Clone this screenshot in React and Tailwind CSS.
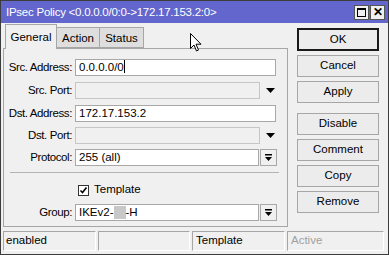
import React from "react";

const font = { fontFamily: '"Liberation Sans", Arial, sans-serif' };

function Arrow() {
  return (
    <svg width="9" height="5" viewBox="0 0 9 5" className="block">
      <path d="M0 0 H9 L4.5 5 Z" fill="#000" />
    </svg>
  );
}

function BarArrow() {
  return (
    <svg width="9" height="9" viewBox="0 0 9 9" className="block">
      <rect x="1" y="1" width="7" height="1.5" fill="#000" />
      <path d="M1 4 H8 L4.5 8 Z" fill="#000" />
    </svg>
  );
}

function Label({ children }) {
  return <div className="w-[71px] text-right pr-[3px] shrink-0 whitespace-nowrap tracking-[-0.4px]">{children}</div>;
}

function Input({ value, w, disabled }) {
  return (
    <div
      className={`h-[17px] border flex items-center pl-[3px] whitespace-nowrap ${
        disabled ? "bg-[#f0f0f0] border-[#c6c6c6]" : "bg-white border-[#a8a8a8]"
      }`}
      style={{ width: w }}
    >
      {value}
    </div>
  );
}

function Btn({ children, ok }) {
  return (
    <div
      className={`w-[82px] flex items-center justify-center bg-[#ececec] ${
        ok ? "h-[23px] border-2 border-[#1a1a1a]" : "h-[22px] border border-[#a6a6a6]"
      }`}
    >
      {children}
    </div>
  );
}

export default function App() {
  return (
    <div
      className="w-[389px] h-[255px] bg-[#f0f0f0] border border-[#3c3c3c] text-[11.5px] text-black leading-none flex flex-col overflow-hidden"
      style={font}
    >
      {/* Title bar */}
      <div className="h-[22px] bg-[#6366cc] flex items-center pl-[5px] pr-[2px] text-white shrink-0">
        <div className="flex-1 pt-[1px] whitespace-nowrap tracking-[-0.25px]">IPsec Policy &lt;0.0.0.0/0:0-&gt;172.17.153.2:0&gt;</div>
        <div className="flex gap-[1px] mr-[1px]">
          <div className="w-[15px] h-[15px] bg-[#f0f0f0] border border-[#555] flex items-center justify-center">
            <div className="w-[9px] h-[9px] border border-black border-t-2" />
          </div>
          <div className="w-[15px] h-[15px] bg-[#f0f0f0] border border-[#555] flex items-center justify-center text-[12px] font-bold text-black">
            ✕
          </div>
        </div>
      </div>

      <div className="flex flex-1 relative">
        {/* cursor */}
        <svg className="absolute left-[189px] top-[10px] z-20" width="12" height="19" viewBox="0 0 12 19">
          <path d="M0.5 0.5 V15.5 L4 12 L6.5 18 L8.5 17 L6 11.2 H11 Z" fill="#fff" stroke="#000" strokeWidth="1" strokeLinejoin="round" />
        </svg>

        {/* left column */}
        <div className="ml-[2px] w-[285px] flex flex-col">
          {/* tabs */}
          <div className="h-[25px] flex items-end pl-[2px] relative z-10">
            <div className="w-[52px] bg-[#f0f0f0] border border-[#a6a6a6] border-b-0 flex items-start justify-center pt-[7px] -mb-[1px] h-[25px]">
              General
            </div>
            <div className="w-[43px] h-[21px] bg-[#dedede] border border-[#a6a6a6] border-l-0 flex items-center justify-center pt-[2px]">
              Action
            </div>
            <div className="w-[44px] h-[21px] bg-[#dedede] border border-[#a6a6a6] border-l-0 flex items-center justify-center pt-[2px]">
              Status
            </div>
          </div>
          {/* panel */}
          <div className="h-[179px] border border-[#a6a6a6] bg-[#f0f0f0] pt-[10px] flex flex-col">
            <div className="flex items-center h-[17px]">
              <Label>Src. Address:</Label>
              <Input w={201} value={<span>0.0.0.0/0<span className="inline-block w-[1px] h-[13px] bg-black align-middle -mt-[2px]" /></span>} />
            </div>
            <div className="flex items-center h-[17px] mt-[6px]">
              <Label>Src. Port:</Label>
              <Input w={185} disabled />
              <div className="ml-[6px]"><Arrow /></div>
            </div>
            <div className="flex items-center h-[17px] mt-[6px]">
              <Label>Dst. Address:</Label>
              <Input w={201} value="172.17.153.2" />
            </div>
            <div className="flex items-center h-[17px] mt-[5px]">
              <Label>Dst. Port:</Label>
              <Input w={185} disabled />
              <div className="ml-[6px]"><Arrow /></div>
            </div>
            <div className="flex items-center h-[17px] mt-[5px]">
              <Label>Protocol:</Label>
              <Input w={184} value="255 (all)" />
              <div className="ml-[1px] w-[17px] h-[17px] border border-[#a8a8a8] bg-[#f0f0f0] flex items-center justify-center">
                <BarArrow />
              </div>
            </div>
            <div className="h-[1px] bg-[#b4b4b4] ml-[6px] w-[269px] mt-[6px]" />
            <div className="flex items-center h-[12px] mt-[11px] pl-[74px]">
              <div className="w-[11px] h-[11px] border border-[#333] bg-white flex items-center justify-center">
                <svg width="9" height="9" viewBox="0 0 9 9"><path d="M1.5 4.5 L3.5 6.5 L7.5 1.5" fill="none" stroke="#000" strokeWidth="1.6" /></svg>
              </div>
              <span className="ml-[5px]">Template</span>
            </div>
            <div className="flex items-center h-[17px] mt-[8px]">
              <Label>Group:</Label>
              <Input
                w={184}
                value={
                  <span className="flex items-center">
                    IKEv2-<span className="inline-block w-[12px] h-[13px] bg-[#c8c8c8]" />-H
                  </span>
                }
              />
              <div className="ml-[1px] w-[17px] h-[17px] border border-[#a8a8a8] bg-[#f0f0f0] flex items-center justify-center">
                <BarArrow />
              </div>
            </div>
          </div>
        </div>

        {/* right column */}
        <div className="ml-[9px] pt-[5px] flex flex-col gap-[4px]">
          <Btn ok>OK</Btn>
          <Btn>Cancel</Btn>
          <Btn>Apply</Btn>
          <div className="h-[2px]" />
          <Btn>Disable</Btn>
          <Btn>Comment</Btn>
          <Btn>Copy</Btn>
          <Btn>Remove</Btn>
        </div>
      </div>

      {/* status bar */}
      <div className="h-[26px] shrink-0 flex items-center gap-[2px] pl-[2px] pr-[4px] pb-[1px]">
        <div className="w-[93px] h-[20px] border border-[#a6a6a6] border-r-white border-b-white flex items-center pl-[2px]">enabled</div>
        <div className="w-[92px] h-[20px] border border-[#a6a6a6] border-r-white border-b-white" />
        <div className="w-[93px] h-[20px] border border-[#a6a6a6] border-r-white border-b-white flex items-center pl-[3px]">Template</div>
        <div className="flex-1 h-[20px] border border-[#a6a6a6] border-r-white border-b-white flex items-center pl-[3px] text-[#a0a0a0]">Active</div>
      </div>
    </div>
  );
}
